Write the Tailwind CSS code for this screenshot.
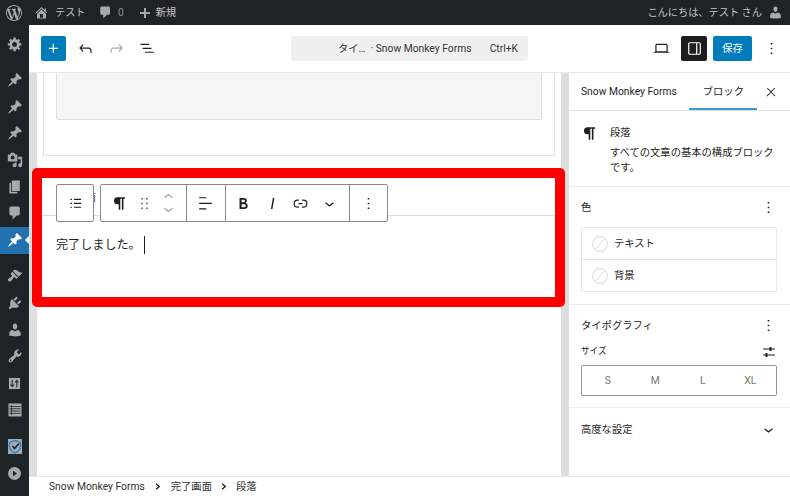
<!DOCTYPE html>
<html lang="ja">
<head>
<meta charset="utf-8">
<script src="https://cdn.jsdelivr.net/npm/@tailwindcss/browser@4"></script>
</head>
<body class="m-0">
<div class="relative w-[790px] h-[496px] overflow-hidden flex flex-col bg-white text-[#1e1e1e] font-['Roboto','Noto_Sans_CJK_JP',sans-serif] text-[10.3px]">
  <!-- admin bar -->
  <header class="h-[25px] shrink-0 bg-[#1d2327] flex items-center text-[#c3c4c7] text-[10.2px] whitespace-nowrap pl-[6px] pr-[7px]">
    <svg class="w-[16px] h-[16px] fill-[#a7aaad]" viewBox="0 0 20 20"><path d="M20 10c0-5.51-4.49-10-10-10C4.48 0 0 4.49 0 10c0 5.52 4.48 10 10 10 5.51 0 10-4.48 10-10zM7.78 15.37L4.37 6.22c.55-.02 1.17-.08 1.17-.08.5-.06.44-1.13-.06-1.11 0 0-1.45.11-2.37.11-.18 0-.37 0-.58-.01C4.12 2.69 6.87 1.11 10 1.11c2.33 0 4.45.87 6.05 2.34-.68-.11-1.65.39-1.65 1.58 0 .74.45 1.36.9 2.1.35.61.55 1.36.55 2.46 0 1.49-1.4 5-1.4 5l-3.03-8.37c.54-.02.82-.17.82-.17.5-.05.44-1.25-.06-1.22 0 0-1.44.12-2.38.12-.87 0-2.33-.12-2.33-.12-.5-.03-.56 1.2-.06 1.22l.92.08 1.26 3.41zM17.41 10c.24-.64.74-1.87.43-4.25.7 1.29 1.05 2.71 1.05 4.25 0 3.29-1.73 6.24-4.4 7.78.97-2.59 1.94-5.2 2.92-7.78zM6.1 18.09C3.12 16.65 1.11 13.53 1.11 10c0-1.3.23-2.48.72-3.59C3.25 10.3 4.67 14.2 6.1 18.09zm4.03-6.63l2.58 6.98c-.86.29-1.76.45-2.71.45-.79 0-1.57-.11-2.29-.33.81-2.38 1.62-4.74 2.42-7.1z"/></svg>
    <svg class="ml-[12px] w-[15px] h-[15px] fill-[#a7aaad]" viewBox="0 0 20 20"><path d="M16 8.5l1.53 1.53-1.06 1.06L10 4.62l-6.47 6.47-1.06-1.06L10 2.5l4 4v-2h2v4zm-6-2.46l6 5.99V18H4v-5.97zM12 17v-5H8v5h4z"/></svg>
    <span class="ml-[6px] w-[31px]">テスト</span>
    <svg class="ml-[12px] w-[15px] h-[15px] fill-[#a7aaad]" viewBox="0 0 20 20"><path d="M5 2h9c1.1 0 2 .9 2 2v7c0 1.1-.9 2-2 2h-2l-5 5v-5H5c-1.1 0-2-.9-2-2V4c0-1.1.9-2 2-2z"/></svg>
    <span class="ml-[5px] text-[#8c8f94]">0</span>
    <svg class="ml-[15px] w-[12px] h-[12px] fill-[#a7aaad]" viewBox="0 0 12 12"><path d="M5 1h2v4h4v2H7v4H5V7H1V5h4z"/></svg>
    <span class="ml-[5px]">新規</span>
    <span class="ml-auto">こんにちは、テスト さん</span>
    <svg class="ml-[6px] w-[15px] h-[15px] fill-[#a7aaad]" viewBox="0 0 20 20"><path d="M10 9.25c-2.27 0-2.73-3.44-2.73-3.44C7 4.02 7.82 2 9.97 2c2.16 0 2.98 2.02 2.71 3.81 0 0-.41 3.44-2.68 3.44zm0 2.57L12.72 10c2.39 0 4.52 2.33 4.52 4.53v2.49s-3.65 1.13-7.24 1.13c-3.65 0-7.24-1.13-7.24-1.13v-2.49c0-2.25 1.94-4.48 4.47-4.48z"/></svg>
  </header>

  <div class="flex-1 flex min-h-0">
    <!-- admin menu -->
    <nav class="w-[29px] shrink-0 bg-[#1d2327] flex flex-col pt-[6px]">
      <div class="h-[26.7px] flex items-center justify-center"><svg class="w-[16px] h-[16px] fill-[#a7aaad]" viewBox="0 0 20 20"><path d="M18 12h-2.18c-.17.7-.44 1.35-.81 1.93l1.54 1.54-2.1 2.1-1.54-1.54c-.58.36-1.23.63-1.91.79V19H8v-2.18c-.68-.16-1.33-.43-1.91-.79l-1.54 1.54-2.12-2.12 1.54-1.54c-.36-.58-.63-1.23-.79-1.91H1V9.03h2.17c.16-.7.44-1.35.8-1.94L2.43 5.55l2.1-2.1 1.54 1.54c.58-.37 1.24-.64 1.93-.81V2h3v2.18c.68.16 1.33.43 1.91.79l1.54-1.54 2.12 2.12-1.54 1.54c.36.59.64 1.24.8 1.94H18V12zm-8.5 1.5c1.66 0 3-1.34 3-3s-1.34-3-3-3-3 1.34-3 3 1.34 3 3 3z"/></svg></div>
      <div class="mt-[9px] h-[26.7px] flex items-center justify-center"><svg class="w-[16px] h-[16px] fill-[#a7aaad]" viewBox="0 0 20 20"><path d="M10.44 3.02l1.82-1.82 6.36 6.35-1.83 1.82c-1.05-.68-2.48-.57-3.41.36l-.75.75c-.92.93-1.04 2.35-.35 3.41l-1.83 1.82-2.41-2.41-2.8 2.79c-.42.42-3.38 2.71-3.8 2.29s1.86-3.39 2.28-3.81l2.79-2.79L4.1 9.36l1.83-1.82c1.05.69 2.48.57 3.4-.36l.75-.75c.93-.92 1.05-2.35.36-3.41z"/></svg></div>
      <div class="h-[26.7px] flex items-center justify-center"><svg class="w-[16px] h-[16px] fill-[#a7aaad]" viewBox="0 0 20 20"><path d="M10.44 3.02l1.82-1.82 6.36 6.35-1.83 1.82c-1.05-.68-2.48-.57-3.41.36l-.75.75c-.92.93-1.04 2.35-.35 3.41l-1.83 1.82-2.41-2.41-2.8 2.79c-.42.42-3.38 2.71-3.8 2.29s1.86-3.39 2.28-3.81l2.79-2.79L4.1 9.36l1.83-1.82c1.05.69 2.48.57 3.4-.36l.75-.75c.93-.92 1.05-2.35.36-3.41z"/></svg></div>
      <div class="h-[26.7px] flex items-center justify-center"><svg class="w-[16px] h-[16px] fill-[#a7aaad]" viewBox="0 0 20 20"><path d="M10.44 3.02l1.82-1.82 6.36 6.35-1.83 1.82c-1.05-.68-2.48-.57-3.41.36l-.75.75c-.92.93-1.04 2.35-.35 3.41l-1.83 1.82-2.41-2.41-2.8 2.79c-.42.42-3.38 2.71-3.8 2.29s1.86-3.39 2.28-3.81l2.79-2.79L4.1 9.36l1.83-1.82c1.05.69 2.48.57 3.4-.36l.75-.75c.93-.92 1.05-2.35.36-3.41z"/></svg></div>
      <div class="h-[26.7px] flex items-center justify-center"><svg class="w-[16px] h-[16px] fill-[#a7aaad]" viewBox="0 0 20 20"><path d="M13 11V4c0-.55-.45-1-1-1h-1.67L9 1H5L3.67 3H2c-.55 0-1 .45-1 1v7c0 .55.45 1 1 1h10c.55 0 1-.45 1-1zM7 4.5c1.38 0 2.5 1.12 2.5 2.5S8.38 9.5 7 9.5 4.5 8.38 4.5 7 5.62 4.5 7 4.5zM14 6h5v10.5c0 1.38-1.12 2.5-2.5 2.5S14 17.88 14 16.5s1.12-2.5 2.5-2.5c.17 0 .34.02.5.05V9h-3V6zm-4 8.05V13h2v3.5c0 1.38-1.12 2.5-2.5 2.5S7 17.88 7 16.5 8.12 14 9.5 14c.17 0 .34.02.5.05z"/></svg></div>
      <div class="h-[26.7px] flex items-center justify-center"><svg class="w-[16px] h-[16px] fill-[#a7aaad]" viewBox="0 0 20 20"><path d="M6 15V2h10v13H6zm-1 1h8v2H3V5h2v11z"/></svg></div>
      <div class="h-[26.7px] flex items-center justify-center"><svg class="w-[16px] h-[16px] fill-[#a7aaad]" viewBox="0 0 20 20"><path d="M5 2h9c1.1 0 2 .9 2 2v7c0 1.1-.9 2-2 2h-2l-5 5v-5H5c-1.1 0-2-.9-2-2V4c0-1.1.9-2 2-2z"/></svg></div>
      <div class="relative h-[26.7px] bg-[#2271b1] flex items-center justify-center"><svg class="w-[16px] h-[16px] fill-white" viewBox="0 0 20 20"><path d="M10.44 3.02l1.82-1.82 6.36 6.35-1.83 1.82c-1.05-.68-2.48-.57-3.41.36l-.75.75c-.92.93-1.04 2.35-.35 3.41l-1.83 1.82-2.41-2.41-2.8 2.79c-.42.42-3.38 2.71-3.8 2.29s1.86-3.39 2.28-3.81l2.79-2.79L4.1 9.36l1.83-1.82c1.05.69 2.48.57 3.4-.36l.75-.75c.93-.92 1.05-2.35.36-3.41z"/></svg><span class="absolute right-0 top-[9.5px] border-y-[4px] border-r-[4px] border-y-transparent border-r-white"></span></div>
      <div class="mt-[9.5px] h-[26.7px] flex items-center justify-center"><svg class="w-[16px] h-[16px] fill-[#a7aaad]" viewBox="0 0 20 20"><path d="M14.48 11.06L7.41 3.99l1.5-1.5c.5-.56 2.3-.47 3.51.32 1.21.8 1.43 1.28 2.91 2.1 1.18.64 2.45 1.26 4.45.85zm-.71.71L6.7 4.7 4.93 6.47c-.39.39-.39 1.02 0 1.41l1.06 1.06c.39.39.39 1.03 0 1.42-.6.6-1.43 1.11-2.21 1.69-.35.26-.7.53-1.01.84C1.43 13.23.4 14.8 1.77 16.17c1.37 1.37 2.96.36 4.28-.95.31-.31.58-.66.85-1.02.57-.78 1.08-1.61 1.69-2.21.39-.39 1.02-.39 1.41 0l1.06 1.06c.39.39 1.02.39 1.41 0z"/></svg></div>
      <div class="h-[26.7px] flex items-center justify-center"><svg class="w-[16px] h-[16px] fill-[#a7aaad]" viewBox="0 0 20 20"><path d="M13.11 4.36L9.87 7.6 8 5.73l3.24-3.24c.35-.34 1.05-.2 1.56.32.52.51.66 1.21.31 1.55zm-8 1.77l.91-1.12 9.01 9.01-1.19.84c-.71.71-2.63 1.16-3.82 1.16H6.14L4.9 17.26c-.59.59-1.54.59-2.12 0-.59-.58-.59-1.53 0-2.12l1.24-1.24v-3.88c0-1.13.4-3.19 1.09-3.89zm7.26 3.97l3.24-3.24c.34-.35 1.04-.21 1.55.31.52.51.66 1.21.31 1.55l-3.24 3.25z"/></svg></div>
      <div class="h-[26.7px] flex items-center justify-center"><svg class="w-[16px] h-[16px] fill-[#a7aaad]" viewBox="0 0 20 20"><path d="M10 9.25c-2.27 0-2.73-3.44-2.73-3.44C7 4.02 7.82 2 9.97 2c2.16 0 2.98 2.02 2.71 3.81 0 0-.41 3.44-2.68 3.44zm0 2.57L12.72 10c2.39 0 4.52 2.33 4.52 4.53v2.49s-3.65 1.13-7.24 1.13c-3.65 0-7.24-1.13-7.24-1.13v-2.49c0-2.25 1.94-4.48 4.47-4.48z"/></svg></div>
      <div class="h-[26.7px] flex items-center justify-center"><svg class="w-[16px] h-[16px] fill-[#a7aaad]" viewBox="0 0 20 20"><path d="M16.68 9.77c-1.34 1.34-3.3 1.67-4.95.99l-5.41 6.52c-.99.99-2.59.99-3.58 0s-.99-2.59 0-3.57l6.52-5.42c-.68-1.65-.35-3.61.99-4.95 1.28-1.28 3.12-1.62 4.72-1.06l-2.89 2.89 2.82 2.82 2.86-2.87c.53 1.58.18 3.39-1.08 4.65zM3.81 16.21c.4.39 1.04.39 1.43 0 .4-.4.4-1.04 0-1.43-.39-.4-1.03-.4-1.43 0-.39.39-.39 1.03 0 1.43z"/></svg></div>
      <div class="h-[26.7px] flex items-center justify-center"><svg class="w-[13px] h-[13px]" viewBox="0 0 14 14"><rect width="12" height="12" x="1" y="1" fill="#a7aaad"/><path d="M4.5 3v7M2.8 8.2l1.7 2 1.7-2M9.5 11V4M7.8 5.8l1.7-2 1.7 2" fill="none" stroke="#1d2327" stroke-width="1.1"/></svg></div>
      <div class="h-[26.7px] flex items-center justify-center"><svg class="w-[14px] h-[14px]" viewBox="0 0 14 14"><rect width="13" height="13" x=".5" y=".5" fill="#a7aaad"/><path d="M1.500 3.500h11M1.500 5.700h11M1.500 8h11M1.500 10.300h11M3.500 2v10" stroke="#1d2327" stroke-width=".8"/></svg></div>
      <div class="mt-[10.5px] h-[26.7px] flex items-center justify-center"><svg class="w-[14px] h-[15px]" viewBox="0 0 14 15"><rect width="14" height="15" fill="#a7aaad"/><path d="M7 1.500 12.500 3.500v4C12.500 10.500 10 12.700 7 14 4 12.700 1.500 10.500 1.500 7.500v-4z" fill="none" stroke="#2b8ccf" stroke-width="1.500"/><path d="M4.500 7 6.500 9.500 11 4.500" fill="none" stroke="#1d2327" stroke-width="1.500"/></svg></div>
      <div class="h-[26.7px] flex items-center justify-center"><svg class="w-[13px] h-[13px]" viewBox="0 0 13 13"><circle cx="6.500" cy="6.500" r="6.500" fill="#a7aaad"/><path d="M5 3.800v5.400l4-2.700z" fill="#1d2327"/></svg></div>
    </nav>

    <div class="flex-1 min-w-0 flex flex-col">
      <!-- editor toolbar -->
      <div class="h-[48px] shrink-0 bg-white border-b border-[#e8e8e8] flex items-center pl-[12px] pr-[9px]">
        <button class="w-[25px] h-[25px] rounded-[2px] bg-[#007cba] flex items-center justify-center"><svg class="w-[19px] h-[19px] fill-white" viewBox="0 0 24 24"><path d="M11 12.500V17.500H12.500V12.500H17.500V11H12.500V6H11V11H6V12.500H11Z"/></svg></button>
        <svg class="ml-[10px] w-[19px] h-[19px] fill-[#1e1e1e]" viewBox="0 0 24 24"><path d="M18.300 11.700c-.6-.6-1.400-.9-2.300-.9H6.700l2.900-3.300-1.100-1-4.500 5L8.500 16l1-1-2.700-2.700H16c.5 0 .9.2 1.300.5 1 1 1 3.400 1 4.500v.3h1.500v-.2c0-1.500 0-4.300-1.500-5.700z"/></svg>
        <svg class="ml-[12px] w-[19px] h-[19px] fill-[#a8a8a8]" viewBox="0 0 24 24"><path d="M15.600 6.500l-1.100 1 2.900 3.300H8c-.9 0-1.700.3-2.300.9-1.400 1.500-1.400 4.200-1.400 5.600v.2h1.500v-.3c0-1.100 0-3.500 1-4.500.3-.3.7-.5 1.300-.5h9.200L14.500 15l1.100 1.100 4.600-4.600-4.600-5z"/></svg>
        <svg class="ml-[12px] w-[19px] h-[19px] fill-[#1e1e1e]" viewBox="0 0 24 24"><path d="M3 6h11v1.500H3V6m3 5h11v1.500H6V11m3 5h11v1.500H9V16"/></svg>
        <div class="ml-[134px] w-[237px] h-[25px] rounded-[3px] bg-[#f0f0f0] flex items-center pl-[47px] pr-[10px] text-[#333] whitespace-nowrap">
          <span>タイ…</span><span class="ml-[5px]">· Snow Monkey Forms</span><span class="ml-auto">Ctrl+K</span>
        </div>
        <svg class="ml-[124px] w-[19px] h-[19px] fill-[#1e1e1e]" viewBox="0 0 24 24"><path d="M20.500 16h-.7V8c0-1.100-.9-2-2-2H6.200c-1.100 0-2 .9-2 2v8h-.7c-.8 0-1.500.7-1.500 1.500h20c0-.8-.7-1.500-1.500-1.500zM5.700 8c0-.3.2-.5.5-.5h11.600c.3 0 .5.2.5.5v7.600H5.700V8z"/></svg>
        <button class="ml-[10px] w-[26px] h-[25px] rounded-[2px] bg-[#1e1e1e] flex items-center justify-center"><svg class="w-[19px] h-[19px] fill-white" viewBox="0 0 24 24"><path fill-rule="evenodd" d="M18 4H6c-1.100 0-2 .9-2 2v12c0 1.100.9 2 2 2h12c1.100 0 2-.9 2-2V6c0-1.100-.9-2-2-2zM5.500 18V6c0-.3.2-.5.5-.5h8v13H6c-.3 0-.5-.2-.5-.5zm13 0c0 .3-.2.5-.5.5h-2.500v-13H18c.3 0 .5.2.5.5v12z"/></svg></button>
        <button class="ml-[6px] w-[39px] h-[25px] rounded-[2px] bg-[#007cba] text-white">保存</button>
        <svg class="ml-[10px] w-[19px] h-[19px] fill-[#1e1e1e]" viewBox="0 0 24 24"><path d="M13 19h-2v-2h2v2zm0-6h-2v-2h2v2zm0-6h-2V5h2v2z"/></svg>
      </div>

      <div class="flex-1 min-h-0 flex">
        <!-- canvas -->
        <main class="flex-1 min-w-0 bg-white border-l-[8px] border-r-[7px] border-[#dedede] px-[6px] flex flex-col">
          <div class="h-[83px] shrink-0 border-x border-b border-[#e0e0e0] px-[12px] pb-[35px]">
            <div class="h-full bg-[#f6f6f6] border-x border-b border-[#e0e0e0] rounded-b-[2px]"></div>
          </div>
          <div class="mt-[22px] h-[119px] pl-[13px] flex flex-col">
            <div class="h-[38px] -ml-[13px] pl-[13px] border-b border-[#dcdcdc] pt-[12px] text-[10px] text-[#444] leading-[16px]">完了画面</div>
            <p class="mt-[19.5px] text-[12.1px] leading-[18px] flex items-center">完了しました。<span class="ml-[3px] w-px h-[18px] bg-[#1e1e1e]"></span></p>
          </div>
        </main>

        <!-- settings sidebar -->
        <aside class="w-[222px] shrink-0 border-l border-[#e0e0e0] bg-white flex flex-col">
          <div class="h-[38px] shrink-0 border-b border-[#e0e0e0] flex items-center pl-[12px] whitespace-nowrap">
            <span>Snow Monkey Forms</span>
            <span class="relative ml-[26px] text-center w-[41px] leading-[37px]">ブロック<span class="absolute -left-[14px] -right-[13px] bottom-0 h-[2px] bg-[#3a9bd0]"></span></span>
            <svg class="ml-[20px] w-[14px] h-[14px] fill-[#1e1e1e]" viewBox="0 0 24 24"><path d="M13 11.800l6.100-6.300-1-1-6.100 6.200-6.100-6.200-1 1 6.100 6.300-6.500 6.700 1 1 6.500-6.600 6.500 6.600 1-1z"/></svg>
          </div>
          <div class="h-[76px] shrink-0 border-b border-[#e8e8e8] flex pl-[11px] pt-[13px]">
            <svg class="w-[19px] h-[19px] fill-[#1e1e1e]" viewBox="0 0 24 24"><path d="M19 4H9.500a4.500 4.500 0 0 0 0 9H11v7h2V6h2v14h2V6h2z"/></svg>
            <div class="ml-[11px] w-[170px] leading-[15px]">
              <div class="mt-[1px]">段落</div>
              <div class="mt-[5px]">すべての文章の基本の構成ブロックです。</div>
            </div>
          </div>
          <section class="h-[118px] shrink-0 border-b border-[#e8e8e8] px-[12px] pt-[11px]">
            <div class="h-[19px] flex items-center justify-between">
              <span>色</span>
              <svg class="w-[19px] h-[19px] fill-[#1e1e1e]" viewBox="0 0 24 24"><path d="M13 19h-2v-2h2v2zm0-6h-2v-2h2v2zm0-6h-2V5h2v2z"/></svg>
            </div>
            <div class="mt-[10px] w-[196px] h-[65px] border border-[#e8e8e8] rounded-[2px] flex flex-col">
              <div class="h-[32px] border-b border-[#e0e0e0] flex items-center pl-[10px]">
                <svg class="w-[16px] h-[16px]" viewBox="0 0 16 16"><circle cx="8" cy="8" r="7.500" fill="none" stroke="#ddd"/><path d="M3 13 13 3" stroke="#ddd"/></svg>
                <span class="ml-[6px]">テキスト</span>
              </div>
              <div class="flex-1 flex items-center pl-[10px]">
                <svg class="w-[16px] h-[16px]" viewBox="0 0 16 16"><circle cx="8" cy="8" r="7.500" fill="none" stroke="#ddd"/><path d="M3 13 13 3" stroke="#ddd"/></svg>
                <span class="ml-[6px]">背景</span>
              </div>
            </div>
          </section>
          <section class="h-[103px] shrink-0 border-b border-[#f0f0f0] px-[12px] pt-[11px]">
            <div class="h-[19px] flex items-center justify-between">
              <span>タイポグラフィ</span>
              <svg class="w-[19px] h-[19px] fill-[#1e1e1e]" viewBox="0 0 24 24"><path d="M13 19h-2v-2h2v2zm0-6h-2v-2h2v2zm0-6h-2V5h2v2z"/></svg>
            </div>
            <div class="mt-[10px] h-[13px] flex items-center justify-between text-[8.600px]">
              <span>サイズ</span>
              <svg class="w-[14px] h-[14px] mr-[2px] fill-[#1e1e1e]" viewBox="0 0 14 14"><path d="M1 3.500h6.500v-1.500h2v1.500H13v1H9.500V6h-2V4.500H1zM1 9.500h2.500V8h2v1.500H13v1H5.500V12h-2v-1.500H1z"/></svg>
            </div>
            <div class="mt-[7px] w-[196px] h-[31px] border border-[#949494] rounded-[2px] grid grid-cols-4 items-center text-center text-[#757575] px-[2px]">
              <span>S</span><span>M</span><span>L</span><span>XL</span>
            </div>
          </section>
          <div class="h-[43px] shrink-0 flex items-center justify-between pl-[12px] pr-[12px]">
            <span>高度な設定</span>
            <svg class="w-[19px] h-[19px] fill-[#1e1e1e]" viewBox="0 0 24 24"><path d="M17.500 11.600L12 16l-5.500-4.400.9-1.200L12 14l4.500-3.600 1 1.200z"/></svg>
          </div>
        </aside>
      </div>

      <!-- breadcrumb -->
      <footer class="h-[20px] shrink-0 bg-white border-t border-[#e8e8e8] flex items-center pl-[20px] text-[#333] whitespace-nowrap">
        <span>Snow Monkey Forms</span>
        <svg class="ml-[9px] w-[9px] h-[9px] fill-[#1e1e1e]" viewBox="0 0 9 9"><path d="M2.500 1.300 6.300 4.500 2.500 7.700 1.700 6.800 4.300 4.500 1.700 2.200z"/></svg>
        <span class="ml-[8px]">完了画面</span>
        <svg class="ml-[8px] w-[9px] h-[9px] fill-[#1e1e1e]" viewBox="0 0 9 9"><path d="M2.500 1.300 6.300 4.500 2.500 7.700 1.700 6.800 4.300 4.500 1.700 2.200z"/></svg>
        <span class="ml-[7px]">段落</span>
      </footer>
    </div>
  </div>

  <!-- red annotation frame -->
  <div class="absolute left-[32px] top-[168px] w-[533px] h-[139px] border-[10px] border-[#ff0000] rounded-[5px]"></div>

  <!-- block toolbar -->
  <div class="absolute left-[56px] top-[184px] flex gap-[6px] h-[38px]">
    <div class="w-[38px] bg-white border border-[#8a8a8a] rounded-[2px] flex items-center justify-center">
      <svg class="w-[19px] h-[19px] fill-[#1e1e1e]" viewBox="0 0 24 24"><path d="M5.500 6h2v1.500h-2zM10 6h9v1.500h-9zM5.500 11h2v1.500h-2zM10 11h9v1.500h-9zM5.500 16h2v1.500h-2zM10 16h9v1.500h-9z"/></svg>
    </div>
    <div class="w-[288px] bg-white border border-[#8a8a8a] rounded-[2px] flex">
      <div class="w-[86px] border-r border-[#8a8a8a] flex items-center pl-[9px]">
        <svg class="w-[19px] h-[19px] fill-[#1e1e1e]" viewBox="0 0 24 24"><path d="M19 4H9.500a4.500 4.500 0 0 0 0 9H11v7h2V6h2v14h2V6h2z"/></svg>
        <svg class="ml-[5.500px] w-[19px] h-[19px] fill-[#555]" viewBox="0 0 24 24"><path d="M8 7h2V5H8v2zm0 6h2v-2H8v2zm0 6h2v-2H8v2zm6-14v2h2V5h-2zm0 8h2v-2h-2v2zm0 6h2v-2h-2v2z"/></svg>
        <div class="ml-[5px] flex flex-col">
          <svg class="w-[19px] h-[12px] fill-[#a8a8a8]" viewBox="0 6 24 12"><path d="M6.500 12.400L12 8l5.500 4.400-.9 1.200L12 10l-4.500 3.600-1-1.200z"/></svg>
          <svg class="w-[19px] h-[12px] fill-[#a8a8a8]" viewBox="0 6 24 12"><path d="M17.500 11.600L12 16l-5.500-4.400.9-1.200L12 14l4.500-3.600 1 1.200z"/></svg>
        </div>
      </div>
      <div class="w-[39px] border-r border-[#8a8a8a] flex items-center justify-center pr-[2px]">
        <svg class="w-[19px] h-[19px] fill-[#1e1e1e]" viewBox="0 0 24 24"><path d="M13 5.500H4V4h9v1.500Zm7 7H4V11h16v1.500Zm-7 7H4V18h9v1.500Z"/></svg>
      </div>
      <div class="w-[124px] border-r border-[#8a8a8a] flex items-center pl-[8px] gap-[9.500px]">
        <svg class="w-[19px] h-[19px] fill-[#1e1e1e]" viewBox="0 0 24 24"><path d="M14.700 11.300c1-.6 1.500-1.600 1.500-3 0-2.300-1.300-3.400-4-3.400H7v14h5.800c1.400 0 2.500-.3 3.300-1 .8-.7 1.200-1.700 1.200-2.900.1-1.900-.8-3.100-2.600-3.700zm-5.100-4h2.300c.6 0 1.100.1 1.400.4.3.3.5.7.5 1.200s-.2 1-.5 1.200c-.3.3-.8.4-1.400.4H9.600V7.300zm4.600 9c-.4.3-1 .4-1.700.4H9.600v-3.900h2.900c.7 0 1.300.2 1.700.5.4.3.6.8.6 1.500s-.2 1.200-.6 1.500z"/></svg>
        <svg class="w-[19px] h-[19px] fill-[#1e1e1e]" viewBox="0 0 24 24"><path d="M12.500 5L10 19h1.900l2.500-14z"/></svg>
        <svg class="w-[19px] h-[19px] fill-[#1e1e1e]" viewBox="0 0 24 24"><path d="M10 17.389H8.444A5.194 5.194 0 1 1 8.444 7H10v1.500H8.444a3.694 3.694 0 0 0 0 7.389H10v1.500ZM14 7h1.556a5.194 5.194 0 0 1 0 10.390H14v-1.500h1.556a3.694 3.694 0 0 0 0-7.390H14V7Zm-4.500 6h5v-1.500h-5V13Z"/></svg>
        <svg class="w-[19px] h-[19px] fill-[#1e1e1e]" viewBox="0 0 24 24"><path d="M17.500 11.600L12 16l-5.500-4.400.9-1.200L12 14l4.500-3.600 1 1.200z"/></svg>
      </div>
      <div class="flex-1 flex items-center justify-center">
        <svg class="w-[19px] h-[19px] fill-[#1e1e1e]" viewBox="0 0 24 24"><path d="M13 19h-2v-2h2v2zm0-6h-2v-2h2v2zm0-6h-2V5h2v2z"/></svg>
      </div>
    </div>
  </div>
</div>
</body>
</html>
